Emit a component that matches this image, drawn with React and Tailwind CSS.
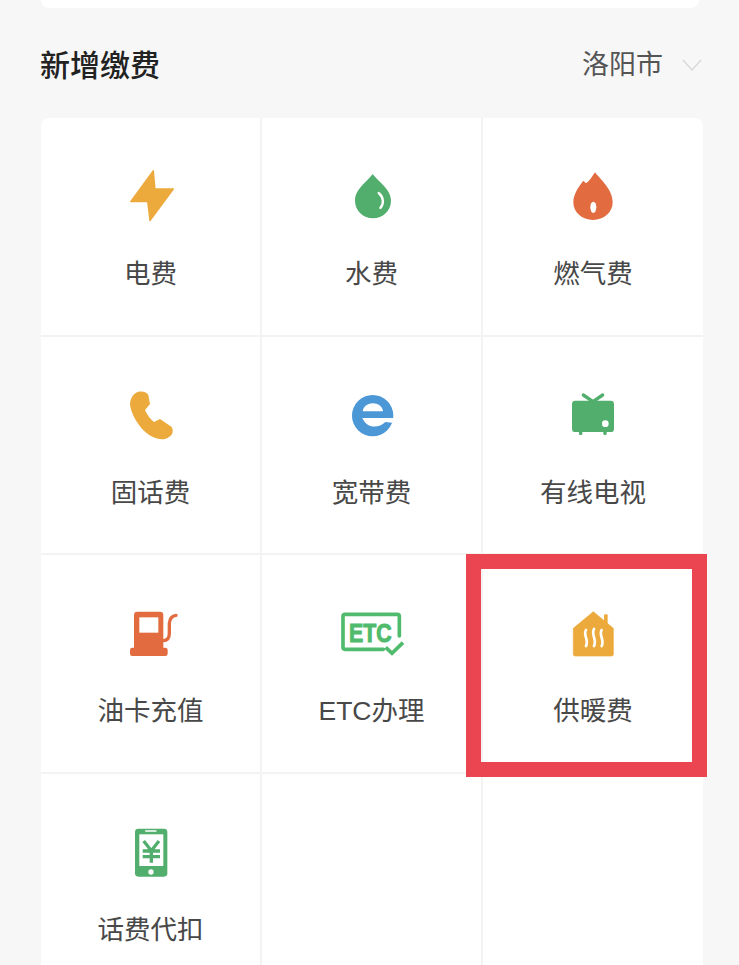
import React from 'react'

const orange = '#edaa3c'
const green = '#52ae6c'
const red = '#e26c40'

// every icon sits in a 56px box, viewBox numbers are 3x page pixels
function IconBox({ view, children }) {
  return (
    <svg width="56" height="56" viewBox={view} className="overflow-visible">
      {children}
    </svg>
  )
}

const Bolt = () => (
  <IconBox view="39 24 168 168">
    <path d="M130 35 L62 128 H113 L120 185 L190 90 H135 Z" fill={orange} stroke={orange} strokeWidth="4" strokeLinejoin="round" />
  </IconBox>
)

const Drop = () => (
  <IconBox view="702 24 168 168">
    <path d="M788 45 C770 70 735 90 735 125 C735 155 760 178 789 178 C818 178 843 155 843 125 C843 90 806 70 788 45 Z" fill={green} />
    <path d="M806 102 C822 115 822 135 811 147" fill="none" stroke="#fff" strokeWidth="7" strokeLinecap="round" />
  </IconBox>
)

const Flame = () => (
  <IconBox view="75 24 168 168">
    <path d="M165 40 C178 58 218 90 218 130 C218 160 192 183 159 183 C126 183 100 160 100 130 C100 105 115 85 130 65 L138 73 C147 68 155 55 165 40 Z" fill={red} />
    <ellipse cx="160" cy="145" rx="9" ry="17" fill="#fff" />
  </IconBox>
)

const Phone = () => (
  <IconBox view="39 18 168 168">
    <path d="M85 35 C100 32 112 38 115 45 L120 72 L105 90 C112 105 120 117 132 126 L150 117 L184 140 C192 150 188 165 178 170 C165 180 150 180 130 172 C100 158 70 120 61 80 C58 62 65 42 85 35 Z" fill={orange} />
  </IconBox>
)

const IeE = () => (
  <IconBox view="702 18 168 168">
    <circle cx="788" cy="107" r="62" fill="#4c97d6" />
    <path d="M758 94 C762 62 816 62 819 94 Z" fill="#fff" />
    <path d="M757 114 H852 V129 L826 126 C805 146 770 146 757 114 Z" fill="#fff" />
  </IconBox>
)

const Tv = () => (
  <IconBox view="45 18 168 168">
    <path d="M100 45 L128 64 M158 45 L130 64" stroke={green} strokeWidth="10" strokeLinecap="round" />
    <rect x="66" y="62" width="126" height="94" rx="10" fill={green} />
    <rect x="87" y="152" width="10" height="13" rx="4" fill={green} />
    <rect x="160" y="152" width="10" height="13" rx="4" fill={green} />
    <circle cx="166" cy="131" r="10" fill="#fff" />
  </IconBox>
)

const Pump = () => (
  <IconBox view="39 12 168 168">
    <path d="M72 45 Q72 35 82 35 H150 Q160 35 160 45 V148 H72 Z" fill={red} />
    <rect x="60" y="143" width="113" height="25" rx="7" fill={red} />
    <rect x="88" y="52" width="57" height="46" fill="#fff" />
    <path d="M160 122 Q178 122 178 100 V70 Q180 48 198 46" fill="none" stroke={red} strokeWidth="10" strokeLinecap="round" />
  </IconBox>
)

const Etc = () => (
  <IconBox view="702 12 168 168">
    <path d="M820 148 H705 Q699 148 699 142 V49 Q699 43 705 43 H862 Q868 43 868 49 V108" fill="none" stroke="#50bb6c" strokeWidth="11" strokeLinecap="round" />
    <text x="717" y="126" fontFamily="Liberation Sans" fontWeight="700" fontSize="77" textLength="128" lengthAdjust="spacingAndGlyphs" fill="#50bb6c" stroke="#50bb6c" strokeWidth="3">ETC</text>
    <path d="M827 142 L846 160 L879 128" fill="none" stroke="#50bb6c" strokeWidth="11" />
  </IconBox>
)

const House = () => (
  <IconBox view="315 177 168 168">
    <rect x="432" y="208" width="11" height="30" rx="3" fill={orange} />
    <path d="M400 200 L460 250 V328 Q460 333 455 333 H345 Q340 333 340 328 V250 Z" fill={orange} stroke={orange} strokeWidth="2" strokeLinejoin="round" />
    <path d="M378 255 C368 270 388 285 378 303 M402 252 C392 268 412 285 402 303 M425 255 C415 270 435 285 425 303" fill="none" stroke="#fff" strokeWidth="8" strokeLinecap="round" />
  </IconBox>
)

const Mobile = () => (
  <IconBox view="39 21 168 168">
    <rect x="75" y="38" width="97" height="144" rx="10" fill={green} />
    <rect x="88" y="55" width="72" height="95" fill="#fff" />
    <rect x="105" y="43" width="35" height="4" rx="2" fill="#fff" />
    <circle cx="123" cy="168" r="8" fill="#fff" />
    <path d="M101 75 L124 104 L147 75 M98 105 H150 M98 122 H150 M124 104 V140" fill="none" stroke={green} strokeWidth="10" />
  </IconBox>
)

const items = [
  { label: '电费', icon: <Bolt /> },
  { label: '水费', icon: <Drop /> },
  { label: '燃气费', icon: <Flame /> },
  { label: '固话费', icon: <Phone /> },
  { label: '宽带费', icon: <IeE /> },
  { label: '有线电视', icon: <Tv /> },
  { label: '油卡充值', icon: <Pump /> },
  { label: 'ETC办理', icon: <Etc /> },
  { label: '供暖费', icon: <House />, marked: true },
  { label: '话费代扣', icon: <Mobile /> },
  { label: '', icon: null },
  { label: '', icon: null },
]

export default function App() {
  return (
    <div className="w-[739px] h-[965px] overflow-hidden bg-[#f7f7f7] font-['Liberation_Sans','Noto_Sans_CJK_SC',sans-serif]">
      {/* bottom edge of the card above */}
      <div className="ml-[41px] w-[658px] h-2 bg-white rounded-b-xl" />

      <div className="ml-[40px] w-[662px] h-[110px] pt-[4px] flex items-center justify-between">
        <h2 className="text-[30px] font-medium text-[#222]">新增缴费</h2>
        <div className="flex items-center gap-[19px]">
          <span className="text-[27px] text-[#555]">洛阳市</span>
          <svg width="20" height="12" viewBox="0 0 20 12" fill="none" stroke="#d9d9d9" strokeWidth="1.5">
            <path d="M1 1 L10 11 L19 1" />
          </svg>
        </div>
      </div>

      <div className="ml-[41px] w-[662px] grid grid-cols-[221px_221px_220px] bg-white rounded-t-lg">
        {items.map((item, i) => (
          <div
            key={i}
            className={`relative h-[218.5px] pt-[49px] flex flex-col items-center border-b-2 border-[#f3f3f3] ${(i + 1) % 3 ? 'border-r-2' : ''}`}
          >
            <div className="h-[56px] w-[56px]">{item.icon}</div>
            <span className="mt-[32px] text-[26.5px] leading-[38px] text-[#484848]">{item.label}</span>
            {item.marked && (
              <div className="absolute left-[-17px] top-[-1px] w-[241px] h-[223px] border-[15px] border-[#ea4550] z-10" />
            )}
          </div>
        ))}
      </div>
    </div>
  )
}
